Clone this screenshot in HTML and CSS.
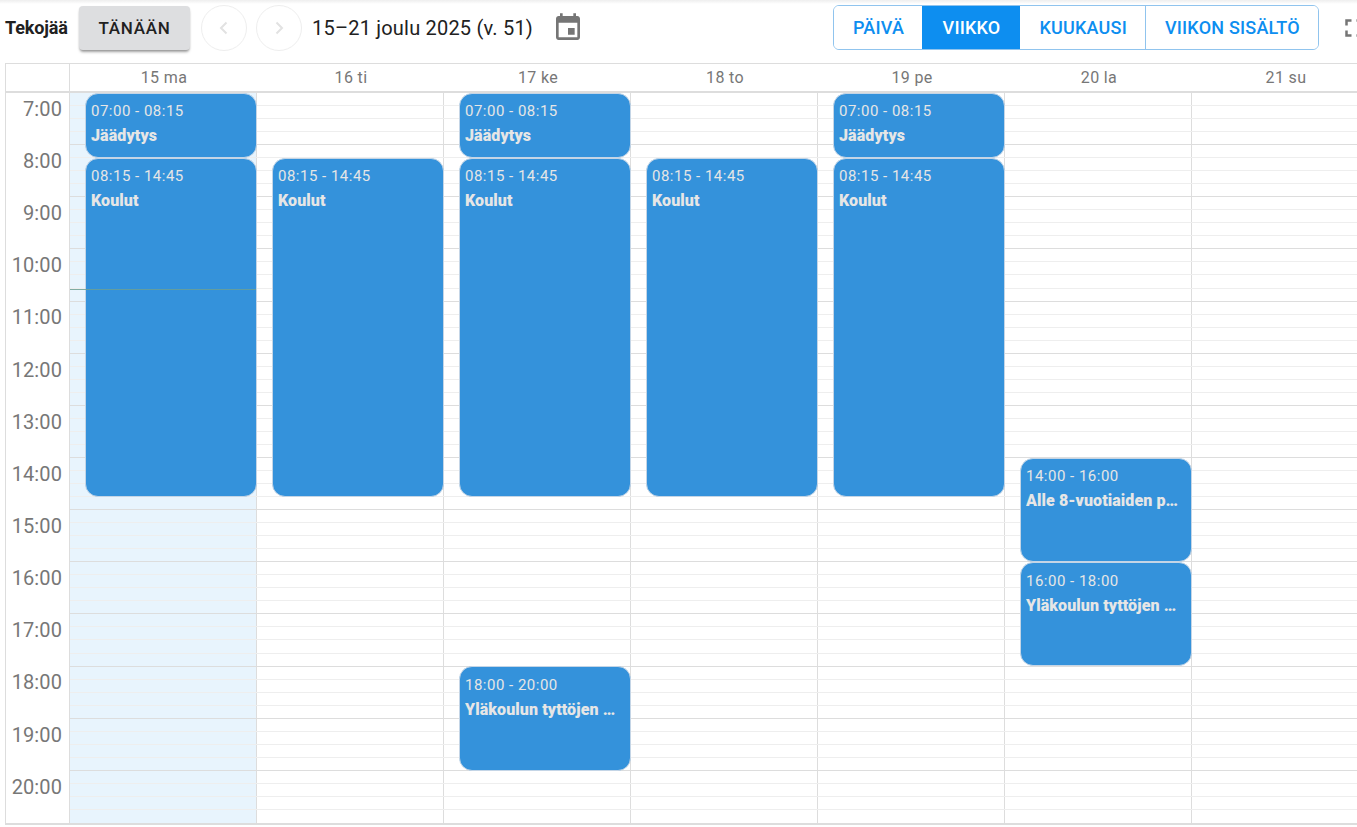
FILE: index.html
```html
<!DOCTYPE html>
<html lang="fi">
<head>
<meta charset="utf-8">
<title>Tekojää</title>
<link rel="stylesheet" href="styles.css">
</head>
<body>
<header class="toolbar">
  <span class="venue">Tekojää</span>
  <button class="today">TÄNÄÄN</button>
  <button class="round"><svg width="24" height="24" viewBox="0 0 24 24"><path d="M14.5 6.5 9 12l5.500 5.500" fill="none" stroke="#e2e2e2" stroke-width="2"/></svg></button>
  <button class="round"><svg width="24" height="24" viewBox="0 0 24 24"><path d="M9.500 6.500 15 12l-5.500 5.500" fill="none" stroke="#e2e2e2" stroke-width="2"/></svg></button>
  <span class="range">15–21 joulu 2025 (v. 51)</span>
  <svg class="cal-icon" width="32" height="32" viewBox="0 0 24 24"><path fill="#757575" d="M17 12h-5v5h5v-5zM16 1v2H8V1H6v2H5c-1.110 0-2 .9-2 2v14c0 1.100.89 2 2 2h14c1.100 0 2-.9 2-2V5c0-1.100-.9-2-2-2h-1V1h-2zm3 18H5V8h14v11z"/></svg>
  <nav class="views">
    <button class="view">PÄIVÄ</button>
    <button class="view active">VIIKKO</button>
    <button class="view">KUUKAUSI</button>
    <button class="view">VIIKON SISÄLTÖ</button>
  </nav>
  <svg class="full-icon" width="30" height="30" viewBox="0 0 24 24"><path fill="#757575" d="M7 14H5v5h5v-2H7v-3zm-2-4h2V7h3V5H5v5zm12 7h-3v2h5v-5h-2v3zM14 5v2h3v3h2V5h-5z"/></svg>
</header>

<section class="calendar">
  <div class="head">
    <div class="corner"></div>
    <div class="dayname">15 ma</div>
    <div class="dayname">16 ti</div>
    <div class="dayname">17 ke</div>
    <div class="dayname">18 to</div>
    <div class="dayname">19 pe</div>
    <div class="dayname">20 la</div>
    <div class="dayname">21 su</div>
  </div>
  <div class="grid">
    <div class="axis">
      <div class="hour">7:00</div><div class="hour">8:00</div><div class="hour">9:00</div><div class="hour">10:00</div><div class="hour">11:00</div><div class="hour">12:00</div><div class="hour">13:00</div><div class="hour">14:00</div><div class="hour">15:00</div><div class="hour">16:00</div><div class="hour">17:00</div><div class="hour">18:00</div><div class="hour">19:00</div><div class="hour">20:00</div>
    </div>
    <div class="days">
      <div class="lines">
        <i></i><i></i><i></i><i class="h"></i><i></i><i></i><i></i><i class="h"></i><i></i><i></i><i></i><i class="h"></i><i></i><i></i><i></i><i class="h"></i><i></i><i></i><i></i><i class="h"></i><i></i><i></i><i></i><i class="h"></i><i></i><i></i><i></i><i class="h"></i><i></i><i></i><i></i><i class="h"></i><i></i><i></i><i></i><i class="h"></i><i></i><i></i><i></i><i class="h"></i><i></i><i></i><i></i><i class="h"></i><i></i><i></i><i></i><i class="h"></i><i></i><i></i><i></i><i class="h"></i><i></i><i></i><i></i><i></i>
      </div>
      <div class="day today-col">
        <article class="event" style="top:0;height:65px"><time>07:00 - 08:15</time><b>Jäädytys</b></article>
        <article class="event" style="top:65px;height:339px"><time>08:15 - 14:45</time><b>Koulut</b></article>
        <div class="now" style="top:196px"></div>
      </div>
      <div class="day">
        <article class="event" style="top:65px;height:339px"><time>08:15 - 14:45</time><b>Koulut</b></article>
      </div>
      <div class="day">
        <article class="event" style="top:0;height:65px"><time>07:00 - 08:15</time><b>Jäädytys</b></article>
        <article class="event" style="top:65px;height:339px"><time>08:15 - 14:45</time><b>Koulut</b></article>
        <article class="event late" style="top:573px;height:105px"><time>18:00 - 20:00</time><b>Yläkoulun tyttöjen pelit</b></article>
      </div>
      <div class="day">
        <article class="event" style="top:65px;height:339px"><time>08:15 - 14:45</time><b>Koulut</b></article>
      </div>
      <div class="day">
        <article class="event" style="top:0;height:65px"><time>07:00 - 08:15</time><b>Jäädytys</b></article>
        <article class="event" style="top:65px;height:339px"><time>08:15 - 14:45</time><b>Koulut</b></article>
      </div>
      <div class="day">
        <article class="event" style="top:365px;height:104px"><time>14:00 - 16:00</time><b>Alle 8-vuotiaiden pelit ja harjoitukset</b></article>
        <article class="event late" style="top:469px;height:104px"><time>16:00 - 18:00</time><b>Yläkoulun tyttöjen pelit</b></article>
      </div>
      <div class="day"></div>
    </div>
  </div>
</section>
</body>
</html>
```

FILE: styles.css
```css
html, body {
  margin: 0;
  height: 100%;
  overflow: hidden;
  background: #fff;
  font-family: Roboto, "Liberation Sans", sans-serif;
  color: #212121;
}

body {
  width: 1357px;
  height: 827px;
  background: linear-gradient(#eeeeee, #ffffff 4px);
}

button {
  font-family: inherit;
  cursor: pointer;
}

.toolbar {
  display: flex;
  align-items: center;
  height: 45px;
  padding: 5px 0 13px 5px;
  width: 1400px;
}

.venue {
  width: 74px;
  flex: none;
  font-size: 18px;
  font-weight: 700;
  letter-spacing: -0.15px;
}

.today {
  width: 111px;
  height: 44px;
  flex: none;
  border: 0;
  border-radius: 4px;
  background: #dddee0;
  color: #212121;
  font-size: 17px;
  font-weight: 500;
  letter-spacing: 0.7px;
  box-shadow: 0 3px 3px -1px rgba(0, 0, 0, .35), 0 1px 2px rgba(0, 0, 0, .12);
}

.round {
  display: flex;
  align-items: center;
  justify-content: center;
  width: 46px;
  height: 46px;
  flex: none;
  margin-left: 9px;
  padding: 0;
  border: 1px solid #eeeeee;
  border-radius: 50%;
  background: #fff;
}

.today + .round {
  margin-left: 11px;
}

.range {
  margin-left: 10px;
  flex: none;
  width: 240px;
  font-size: 20px;
  letter-spacing: 0.2px;
  color: #212121;
}

.cal-icon {
  flex: none;
}

.views {
  display: flex;
  flex: none;
  height: 45px;
  margin-left: 249px;
  box-sizing: border-box;
  border: 1px solid #90c4ee;
  border-radius: 6px;
  overflow: hidden;
}

.view {
  padding: 0 18px 0 19px;
  border: 0;
  border-left: 1px solid #90c4ee;
  background: #fff;
  color: #0d8ef0;
  font-size: 18px;
  font-weight: 500;
  letter-spacing: 0.2px;
}

.view:first-child {
  border-left: 0;
}

.view.active {
  background: #0d8ef0;
  border-left-color: #0d8ef0;
  color: #fff;
  padding: 0 20px 0 19.500px;
}

.view.active + .view {
  border-left: 0;
}

.full-icon {
  flex: none;
  margin-left: 20px;
}

.calendar {
  width: 1374px;
  margin-left: 5px;
  box-sizing: border-box;
  border-top: 1px solid #dddddd;
  border-left: 1px solid #dddddd;
  border-bottom: 2px solid #dddddd;
}

.head {
  display: grid;
  grid-template-columns: 64px repeat(7, 187px);
  height: 27px;
  border-bottom: 2px solid #dddddd;
}

.corner {
  border-right: 1px solid #dddddd;
}

.dayname {
  display: flex;
  align-items: center;
  justify-content: center;
  padding-left: 1px;
  font-size: 16px;
  letter-spacing: 0.35px;
  color: #777777;
}

.grid {
  display: grid;
  grid-template-columns: 64px 1fr;
  height: 730px;
}

.axis {
  display: grid;
  grid-template-rows: repeat(14, 1fr);
  border-right: 1px solid #dddddd;
  box-sizing: border-box;
}

.hour {
  padding: 3.800px 7px 0 0;
  text-align: right;
  font-size: 20px;
  line-height: 24px;
  letter-spacing: 0.1px;
  color: #777777;
}

.days {
  position: relative;
  display: grid;
  grid-template-columns: repeat(7, 187px);
}

.lines {
  position: absolute;
  z-index: 1;
  inset: 0;
  display: grid;
  grid-template-rows: repeat(56, 1fr);
  pointer-events: none;
}

.lines i {
  border-bottom: 1px solid #eeeeee;
}

.lines i.h {
  border-bottom-color: #dddddd;
}

.lines i:last-child {
  border-bottom: 0;
}

.day {
  position: relative;
  box-sizing: border-box;
  border-right: 1px solid #dddddd;
}

.today-col {
  background: #e8f4fd;
}

.event {
  position: absolute;
  z-index: 2;
  left: 15px;
  right: -1px;
  box-sizing: border-box;
  padding: 8px 11px 0 5px;
  border: 1px solid #c4d5e6;
  border-radius: 13px;
  background: #3492db;
  color: #e6e6e6;
  font-size: 15px;
  overflow: hidden;
}

.event.late {
  padding-top: 9px;
}

.event time {
  display: block;
  height: 24px;
  line-height: 18px;
  letter-spacing: 0.5px;
}

.event b {
  display: block;
  font-size: 16px;
  line-height: 20px;
  font-weight: 900;
  letter-spacing: 0.1px;
  white-space: nowrap;
  overflow: hidden;
  text-overflow: ellipsis;
}

.now {
  position: absolute;
  z-index: 3;
  left: 0;
  right: 0;
  height: 1px;
  background: #6c9f93;
  opacity: .85;
}
```
